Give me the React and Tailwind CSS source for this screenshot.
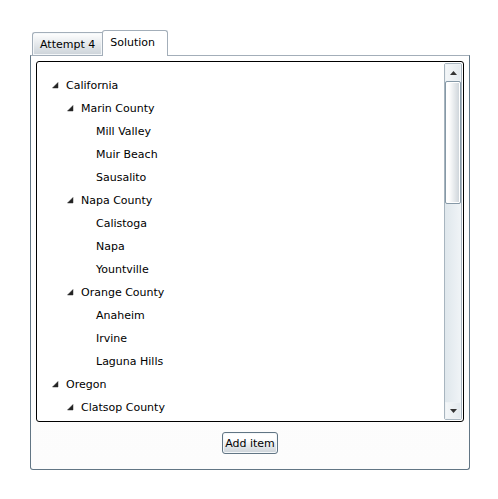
import { useState } from "react";

const REGIONS = [
  {
    name: "California",
    children: [
      { name: "Marin County", children: [{ name: "Mill Valley" }, { name: "Muir Beach" }, { name: "Sausalito" }] },
      { name: "Napa County", children: [{ name: "Calistoga" }, { name: "Napa" }, { name: "Yountville" }] },
      { name: "Orange County", children: [{ name: "Anaheim" }, { name: "Irvine" }, { name: "Laguna Hills" }] },
    ],
  },
  { name: "Oregon", children: [{ name: "Clatsop County", children: [] }] },
];

function TreeNode({ node }) {
  const [open, setOpen] = useState(true);
  return (
    <li role="treeitem" aria-expanded={node.children ? open : undefined}>
      <div className="flex h-[23px] items-center">
        {node.children ? (
          <button
            type="button"
            aria-label={`Toggle ${node.name}`}
            onClick={() => setOpen(!open)}
            className="flex w-3.5 shrink-0 justify-start"
          >
            <svg width="7" height="7" viewBox="0 0 7 7" aria-hidden="true">
              <path d={open ? "M6 0.5V6H0.5Z" : "M1 0L5 3.5L1 7Z"} fill="#222" stroke="#333" strokeWidth="0.5" />
            </svg>
          </button>
        ) : (
          <span className="w-3.5 shrink-0" />
        )}
        <span>{node.name}</span>
      </div>
      {node.children && open && (
        <ul role="group" className="pl-[15px]">
          {node.children.map((child) => (
            <TreeNode key={child.name} node={child} />
          ))}
        </ul>
      )}
    </li>
  );
}

function ScrollBar() {
  return (
    <div className="flex w-[18px] shrink-0 flex-col rounded-xs border border-[#a8b5bf] bg-linear-to-r from-[#dfe7ec] to-[#f0f4f7]">
      <button
        type="button"
        aria-label="Scroll up"
        className="flex h-[17px] items-center justify-center border border-[#edf1f4] bg-linear-to-r from-[#f3f6f8] to-[#e4eaee]"
      >
        <svg width="7" height="4" viewBox="0 0 7 4" aria-hidden="true">
          <path d="M3.5 0L7 4H0Z" fill="#333" />
        </svg>
      </button>
      <div className="h-[123px] rounded-xs border border-[#8699a7] bg-linear-to-r from-white from-20% to-[#cbd2d8] shadow-[inset_0_0_0_1px_#ffffff]" />
      <div className="grow" />
      <button
        type="button"
        aria-label="Scroll down"
        className="flex h-[17px] items-center justify-center border border-[#edf1f4] bg-linear-to-r from-[#f3f6f8] to-[#e4eaee]"
      >
        <svg width="7" height="4" viewBox="0 0 7 4" aria-hidden="true">
          <path d="M0 0H7L3.5 4Z" fill="#333" />
        </svg>
      </button>
    </div>
  );
}

export default function App() {
  return (
    <main className="bg-white py-[30px] pr-7 pl-[30px] font-['DejaVu_Sans',Verdana,sans-serif] text-[11px] leading-4 text-black">
      <div role="tablist" className="z-10 -mb-px flex items-end pl-0.5">
        <button
          type="button"
          role="tab"
          aria-selected="false"
          className="mb-px flex h-[23px] items-end justify-center whitespace-nowrap rounded-tl-[3px] border border-r-0 border-b-0 border-[#a3aeb9] bg-linear-to-b from-white to-[#ccd3d9] px-[7px] pb-0.5 shadow-[inset_0_0_0_1px_#f4f7f9]"
        >
          Attempt 4
        </button>
        <button
          type="button"
          role="tab"
          aria-selected="true"
          className="relative flex h-[26px] items-start justify-center whitespace-nowrap rounded-t-[3px] border border-b-0 border-[#a3aeb9] bg-white px-[7px] pt-1 pr-3"
        >
          Solution
        </button>
      </div>
      <section
        role="tabpanel"
        aria-label="Solution"
        className="rounded-[3px] rounded-t-none border border-[#617584] border-t-[#a3aeb9] bg-linear-to-b from-white to-[#fcfcfc] p-[5px]"
      >
        <div className="flex h-[361px] overflow-hidden rounded-[3px] border border-black bg-white p-px">
          <ul role="tree" aria-label="Regions" className="min-w-0 grow overflow-hidden pt-[11px] pl-3.5">
            {REGIONS.map((node) => (
              <TreeNode key={node.name} node={node} />
            ))}
          </ul>
          <ScrollBar />
        </div>
        <div className="flex justify-center pt-2.5 pb-2.5">
          <button
            type="button"
            className="flex h-[22px] items-end whitespace-nowrap rounded-[3px] border border-[#617584] bg-linear-to-b from-white from-30% to-[#cbd2d8] px-0.5 pb-px shadow-[inset_0_0_0_1px_#f4f7f9]"
          >
            Add item
          </button>
        </div>
      </section>
    </main>
  );
}
